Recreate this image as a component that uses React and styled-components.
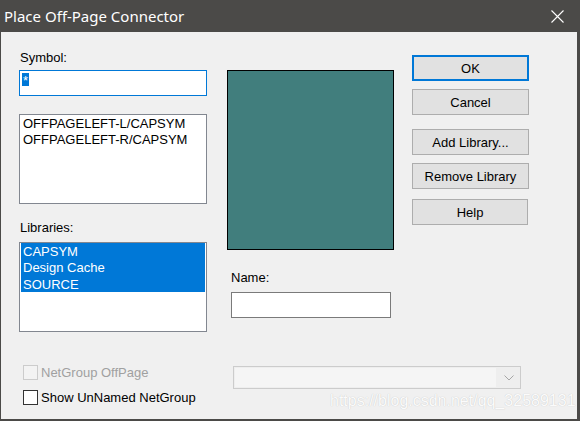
import React from "react";
import styled, { createGlobalStyle } from "styled-components";

const GlobalStyle = createGlobalStyle`
  html, body {
    margin: 0;
    padding: 0;
  }
  body {
    width: 580px;
    height: 421px;
    overflow: hidden;
    background: #f0f0f0;
  }
`;

const symbols = ["OFFPAGELEFT-L/CAPSYM", "OFFPAGELEFT-R/CAPSYM"];
const libraries = ["CAPSYM", "Design Cache", "SOURCE"];

const App = () => {
  return (
    <>
      <GlobalStyle />
      <Window>
        <TitleBar>
          <span>Place Off-Page Connector</span>
          <svg width="13" height="13" viewBox="0 0 13 13">
            <path d="M0.5 0.5 L12.5 12.5 M12.5 0.5 L0.5 12.5" stroke="#fff" strokeWidth="1.1" />
          </svg>
        </TitleBar>
        <Body>
          <TopRow>
            <LeftCol>
              <Label>Symbol:</Label>
              <SymbolField>
                <Selection>*</Selection>
              </SymbolField>
              <ListBox $top={18}>
                {symbols.map((s) => (
                  <ListItem key={s}>{s}</ListItem>
                ))}
              </ListBox>
              <Label $top={16}>Libraries:</Label>
              <ListBox $top={6}>
                {libraries.map((l) => (
                  <ListItem key={l} $selected>
                    {l}
                  </ListItem>
                ))}
              </ListBox>
            </LeftCol>
            <MiddleCol>
              <Preview />
              <Label $top={20} $indent={4}>
                Name:
              </Label>
              <NameField />
            </MiddleCol>
            <RightCol>
              <Button $top={5} $default>
                OK
              </Button>
              <Button $top={8}>Cancel</Button>
              <Button $top={14}>Add Library...</Button>
              <Button $top={8}>Remove Library</Button>
              <Button $top={10} $width={116}>
                Help
              </Button>
            </RightCol>
          </TopRow>
          <BottomRow>
            <Checks>
              <CheckRow $disabled>
                <CheckBox $disabled />
                NetGroup OffPage
              </CheckRow>
              <CheckRow>
                <CheckBox />
                Show UnNamed NetGroup
              </CheckRow>
            </Checks>
            <Combo>
              <ComboField />
              <svg width="10" height="6" viewBox="0 0 10 6">
                <path d="M0.5 0.5 L5 5 L9.5 0.5" fill="none" stroke="#a6a6a6" strokeWidth="1" />
              </svg>
            </Combo>
          </BottomRow>
        </Body>
        <Watermark>https://blog.csdn.net/qq_32589131</Watermark>
      </Window>
    </>
  );
};

const Window = styled.div`
  position: relative;
  box-sizing: border-box;
  width: 580px;
  height: 421px;
  display: flex;
  flex-direction: column;
  background: #f0f0f0;
  border-left: 1px solid #4b4a48;
  border-right: 3px solid #4b4a48;
  border-bottom: 2px solid #4b4a48;
  font-family: "Liberation Sans", Arial, sans-serif;
  font-size: 13px;
  color: #000;
`;

const TitleBar = styled.div`
  flex: none;
  height: 32px;
  display: flex;
  align-items: center;
  justify-content: space-between;
  padding: 0 13px 0 3px;
  background: #4b4a48;
  color: #fff;
  font-family: "Segoe UI", "Noto Sans", sans-serif;
  font-size: 15px;
`;

const Body = styled.div`
  display: flex;
  flex-direction: column;
  padding: 18px 0 0 18px;
`;

const TopRow = styled.div`
  display: flex;
  align-items: flex-start;
`;

const LeftCol = styled.div`
  width: 188px;
  display: flex;
  flex-direction: column;
`;

const MiddleCol = styled.div`
  width: 167px;
  margin-left: 20px;
  display: flex;
  flex-direction: column;
`;

const RightCol = styled.div`
  width: 117px;
  margin-left: 18px;
  display: flex;
  flex-direction: column;
`;

const Label = styled.div`
  line-height: 16px;
  margin-top: ${(p) => p.$top || 0}px;
  padding-left: ${(p) => (p.$indent ?? 1)}px;
`;

const SymbolField = styled.div`
  box-sizing: border-box;
  height: 26px;
  margin-top: 4px;
  padding: 2px 0 0 2px;
  background: #fff;
  border: 1px solid #0078d7;
`;

const Selection = styled.span`
  display: inline-block;
  height: 13px;
  line-height: 15px;
  padding: 0 1px;
  background: #0078d7;
  color: #fff;
`;

const ListBox = styled.div`
  box-sizing: border-box;
  height: 90px;
  margin-top: ${(p) => p.$top}px;
  padding: 0 1px;
  background: #fff;
  border: 1px solid #828790;
`;

const ListItem = styled.div`
  height: 16.33px;
  line-height: 18px;
  padding-left: 2px;
  white-space: nowrap;
  background: ${(p) => (p.$selected ? "#0078d7" : "transparent")};
  color: ${(p) => (p.$selected ? "#fff" : "#000")};
`;

const Preview = styled.div`
  box-sizing: border-box;
  height: 180px;
  margin-top: 20px;
  background: #417e7d;
  border: 1px solid #000;
`;

const NameField = styled.div`
  box-sizing: border-box;
  width: 160px;
  height: 26px;
  margin: 6px 0 0 4px;
  background: #fff;
  border: 1px solid #7a7a7a;
`;

const Button = styled.div`
  box-sizing: border-box;
  width: ${(p) => p.$width || 117}px;
  height: 26px;
  margin-top: ${(p) => p.$top}px;
  display: flex;
  align-items: center;
  justify-content: center;
  background: #e1e1e1;
  border: ${(p) => (p.$default ? "2px solid #0078d7" : "1px solid #adadad")};
`;

const BottomRow = styled.div`
  display: flex;
  align-items: flex-start;
  margin-top: 33px;
  padding-left: 4px;
`;

const Checks = styled.div`
  width: 210px;
  display: flex;
  flex-direction: column;
  gap: 10px;
`;

const CheckRow = styled.div`
  display: flex;
  align-items: center;
  gap: 3px;
  height: 15px;
  line-height: 15px;
  color: ${(p) => (p.$disabled ? "#a0a0a0" : "#000")};
`;

const CheckBox = styled.span`
  box-sizing: border-box;
  width: 15px;
  height: 15px;
  background: ${(p) => (p.$disabled ? "#f3f3f3" : "#fff")};
  border: 1px solid ${(p) => (p.$disabled ? "#cccccc" : "#333333")};
`;

const Combo = styled.div`
  box-sizing: border-box;
  width: 288px;
  height: 23px;
  margin-top: 1px;
  display: flex;
  align-items: center;
  padding: 1px 6px 1px 1px;
  gap: 8px;
  background: #eeeeee;
  border: 1px solid #cccccc;
`;

const ComboField = styled.div`
  flex: 1;
  height: 100%;
  background: #f5f5f5;
`;

const Watermark = styled.div`
  position: absolute;
  left: 329px;
  top: 392px;
  line-height: 18px;
  font-size: 16px;
  color: #fbfbfb;
  text-shadow: 0 0 1px rgba(0, 0, 0, 0.22);
  white-space: nowrap;
`;

export default App;
